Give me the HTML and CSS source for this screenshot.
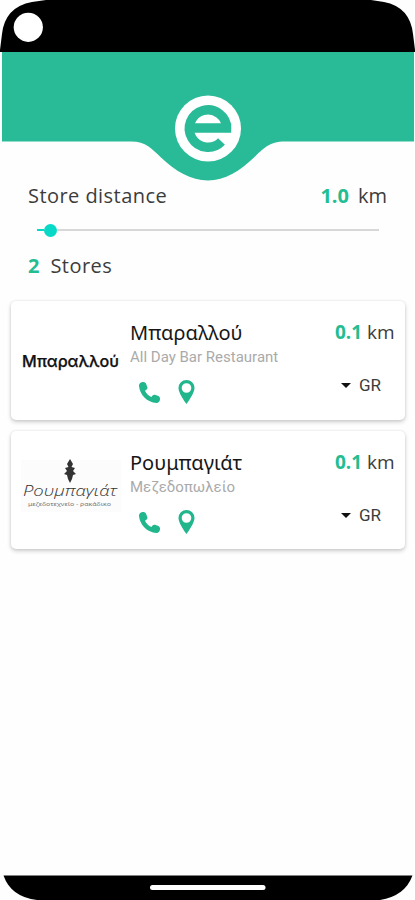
FILE: index.html
```html
<!DOCTYPE html>
<html lang="el">
<head>
<meta charset="utf-8">
<title>Stores</title>
<link rel="stylesheet" href="styles.css">
</head>
<body>
<svg class="defs" width="0" height="0">
  <symbol id="phone" viewBox="0 0 24 24"><path d="M5.200 1C3 1 1 2.600 1 4.700 1.700 14.500 9.500 22.300 19.300 23c2.100 0 3.700-2 3.700-4.200 0-1.500-.6-2.600-1.800-3.100l-3.300-1.300c-1-.4-2-.1-2.700.7l-1.300 1.700C11.200 15.500 8.600 12.900 7.300 10.200L9 8.900c.8-.7 1.100-1.700.7-2.700L8.400 2.900C7.900 1.600 6.700 1 5.200 1z"/></symbol>
  <symbol id="pin" viewBox="0 0 16 24"><path fill-rule="evenodd" d="M8 0a8 8 0 0 0-8 8c0 5.500 8 16 8 16s8-10.500 8-16a8 8 0 0 0-8-8zm0 3.200a4.800 4.800 0 1 1 0 9.600 4.800 4.800 0 0 1 0-9.600z"/></symbol>
</svg>
<div class="phone">
  <header class="top">
    <svg width="415" height="181" viewBox="0 0 415 181">
      <path d="M0 52V50L2 34Q5 7 32 2L46 0H371L384 2Q410 7 413 34L415 50V52z"/>
      <circle cx="28.300" cy="27.300" r="14.600" fill="#fff"/>
      <path class="green" d="M2 52H414V141.500H285C269 141.500 263 149 254 157.500C240 171 225 180.500 208 180.500S175 171 161 157.500C152 149 146 141.500 131 141.500H2z"/>
      <circle cx="208" cy="128.500" r="33" fill="#fff"/>
      <path class="letter" d="M190 128H231.200M226.700 128.500A18.700 18.700 0 1 0 221.500 141.500"/>
    </svg>
  </header>
  <main>
    <div class="row distance"><span class="label">Store distance</span><span><b>1.0</b><span class="unit">km</span></span></div>
    <div class="slider"><i class="filled"></i><i class="thumb"></i><i class="rest"></i></div>
    <div class="row count"><span><b>2</b><span class="stores">Stores</span></span></div>
    <section class="cards">
      <article class="card">
        <svg class="logo" width="100" height="80" viewBox="0 0 100 80">
          <text class="logo-bold" x="1" y="46.500" textLength="97" lengthAdjust="spacingAndGlyphs">Μπαραλλού</text>
        </svg>
        <div class="info">
          <h2>Μπαραλλού</h2>
          <p>All Day Bar Restaurant</p>
          <div class="actions"><svg class="call"><use href="#phone"/></svg><svg class="map"><use href="#pin"/></svg></div>
        </div>
        <div class="side">
          <div class="km"><b>0.1</b> km</div>
          <div class="lang"><i class="caret"></i>GR</div>
        </div>
      </article>
      <article class="card">
        <svg class="logo" width="100" height="80" viewBox="0 0 100 80">
          <path class="tint" d="M0 10H100V62H0z"/>
          <path class="ornament" d="M49 9L52 14 50.500 17 54 18 52 21 55 24 52 25 51 29 49 33 47 29 46 25 43 24 46 21 44 18 47.500 17 46 14z"/>
          <text class="logo-thin" x="2" y="45.500" textLength="94" lengthAdjust="spacingAndGlyphs">Ρουμπαγιάτ</text>
          <text class="logo-small" x="7" y="56" textLength="83" lengthAdjust="spacingAndGlyphs">μεζεδοτεχνείο - ρακάδικο</text>
        </svg>
        <div class="info">
          <h2>Ρουμπαγιάτ</h2>
          <p>Μεζεδοπωλείο</p>
          <div class="actions"><svg class="call"><use href="#phone"/></svg><svg class="map"><use href="#pin"/></svg></div>
        </div>
        <div class="side">
          <div class="km"><b>0.1</b> km</div>
          <div class="lang"><i class="caret"></i>GR</div>
        </div>
      </article>
    </section>
  </main>
  <footer>
    <svg width="415" height="25" viewBox="0 0 415 25">
      <path d="M3.500 .5H412.500Q405 21 380 25H37Q11 22 3.500 .5z"/>
      <rect x="150" y="10" width="115.500" height="5" rx="2.500" fill="#fff"/>
    </svg>
  </footer>
</div>
</body>
</html>
```
FILE: styles.css
```css
* { box-sizing: border-box; }
body { margin: 0; background: #fefefe; font-family: "Open Sans", "Noto Sans", sans-serif; color: #3c3c3c; }
svg { display: block; }
.defs { position: absolute; }
.phone { width: 415px; height: 900px; display: flex; flex-direction: column; overflow: hidden; }
.top { height: 181px; }
.green { fill: #29bb98; }
.letter { fill: none; stroke: #29bb98; stroke-width: 9.4; }
main { flex: 1; }
b { color: #24bd92; font-weight: 700; }
.row { display: flex; justify-content: space-between; height: 30px; line-height: 30px; font-size: 20px; padding: 0 28px; }
.label, .stores { letter-spacing: .45px; }
.unit { margin-left: 9px; }
.slider { display: flex; align-items: center; height: 14px; margin: 12px 36px 0 37px; }
.filled { width: 7px; height: 2px; background: #08d9c6; }
.thumb { width: 13px; height: 13px; border-radius: 50%; background: #08d9c6; }
.rest { flex: 1; height: 2px; background: #d7d7d7; }
.count { margin-top: 14px; }
.stores { margin-left: 11px; }
.cards { display: flex; flex-direction: column; gap: 11px; padding: 20px 10px 0 11px; }
.card { display: flex; height: 119px; padding-left: 10px; background: #fff; border-radius: 5px; box-shadow: 0 2px 4px rgba(0,0,0,.2), 0 0 3px rgba(0,0,0,.08); }
.card + .card { height: 118px; }
.logo { flex: none; margin-top: 19px; overflow: visible; }
.info { flex: none; width: 200px; padding: 18px 0 0 9px; }
h2 { margin: 0; font: 400 20px/28px "Noto Sans", sans-serif; color: #171717; white-space: nowrap; }
p { margin: 0; height: 20px; font: 15px/21px Roboto, sans-serif; color: #aaa; white-space: nowrap; }
.actions { display: flex; align-items: flex-start; gap: 17px; padding: 13px 0 0 8px; fill: #22b68d; }
.call { width: 23px; height: 23px; margin-top: 1px; }
.map { width: 17px; height: 24px; }
.side { flex: 1; padding-top: 17px; }
.km { font-size: 19px; line-height: 28px; padding-left: 14px; white-space: nowrap; }
.lang { display: flex; align-items: center; gap: 8px; height: 22px; margin-top: 28px; padding-left: 20px; font: 17px Roboto, sans-serif; }
.caret { border: 5px solid transparent; border-top-color: #111; border-bottom: 0; }
.tint { fill: #fcfcfc; }
.ornament { fill: #333; }
.logo-bold { font: 500 15.5px Inter, sans-serif; fill: #111; stroke: #111; stroke-width: .25; }
.logo-thin { font: italic 300 15px "Open Sans", sans-serif; fill: #333; }
.logo-small { font: 6px "Noto Sans", sans-serif; fill: #777; }
footer { height: 25px; }
```
